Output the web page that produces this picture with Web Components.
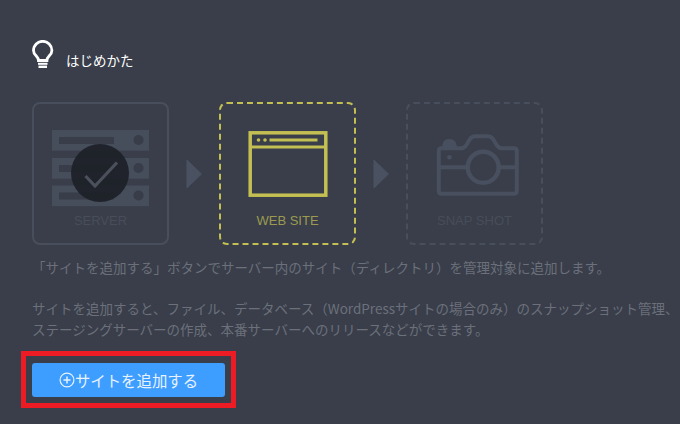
<!DOCTYPE html>
<html lang="ja">
<head>
<meta charset="utf-8">
<title>はじめかた</title>
<style>
    html, body { margin: 0; height: 100%; background: #393e4a; overflow: hidden; }
    body { font-family: "Noto Sans CJK JP", "Noto Sans", sans-serif; }
    svg { display: block; }
</style>
</head>
<body>
<start-guide>
    <guide-step slot="steps" label="SERVER" state="done">
        <svg width="100" height="80" viewBox="0 0 100 80">
            <g fill="#464d5b">
                <rect x="1" y="2" width="97" height="20.7"/>
                <rect x="1" y="30" width="97" height="20.7"/>
                <rect x="1" y="57.5" width="97" height="20.7"/>
            </g>
            <g fill="#383d49">
                <rect x="8" y="9" width="55" height="7"/>
                <rect x="8" y="37" width="55" height="7"/>
                <rect x="8" y="64.5" width="55" height="7"/>
                <circle cx="87.5" cy="12" r="5"/>
                <circle cx="87.5" cy="40" r="5"/>
                <circle cx="87.5" cy="67.5" r="5"/>
            </g>
            <circle cx="49" cy="45" r="29" fill="#1c1f26" fill-opacity=".9"/>
            <path d="M34.5 48 L44 58 L66 34.5" fill="none" stroke="#4b505b" stroke-width="3.2"/>
        </svg>
    </guide-step>
    <step-arrow slot="steps"></step-arrow>
    <guide-step slot="steps" label="WEB SITE" state="active">
        <svg width="100" height="80" viewBox="0 0 100 80" fill="none" stroke="#c4bf52">
            <rect x="12.2" y="4.8" width="75.6" height="62.4" stroke-width="3.5"/>
            <path d="M12 19 H88" stroke-width="2.8"/>
            <circle cx="20.5" cy="12" r="1.8" fill="#c4bf52" stroke="none"/>
            <circle cx="27" cy="12" r="1.8" fill="#c4bf52" stroke="none"/>
            <path d="M31.5 12 H79.5" stroke-width="3"/>
        </svg>
    </guide-step>
    <step-arrow slot="steps"></step-arrow>
    <guide-step slot="steps" label="SNAP SHOT" state="todo">
        <svg width="100" height="80" viewBox="0 0 100 80" fill="none" stroke="#484f5e" stroke-width="4">
            <path d="M16 20.3 H36 Q39 20.3 41 17.5 L45 11 Q47 8.3 50 8.3 H63 Q66 8.3 68 11 L72 17.5 Q74 20.3 77 20.3 H89 Q91.8 20.3 91.8 23 V63 Q91.8 65.7 89 65.7 H16.5 Q13.8 65.7 13.8 63 V23 Q13.8 20.3 16 20.3 Z" stroke-linejoin="round"/>
            <path d="M14 39.3 H43 M73 39.3 H91"/>
            <circle cx="58.2" cy="39.3" r="15.5" stroke-width="4.5"/>
            <path d="M17 20 Q17 11 24 11 Q32 11 32 20 Z" fill="#484f5e" stroke="none"/>
            <circle cx="24.5" cy="29.3" r="2.3" fill="#484f5e" stroke="none"/>
        </svg>
    </guide-step>
    <p slot="text">「サイトを追加する」ボタンでサーバー内のサイト（ディレクトリ）を管理対象に追加します。</p>
    <p slot="text">サイトを追加すると、ファイル、データベース（WordPressサイトの場合のみ）のスナップショット管理、<br>ステージングサーバーの作成、本番サーバーへのリリースなどができます。</p>
    <add-site-button slot="action">サイトを追加する</add-site-button>
</start-guide>

<script>
(function() {
    "use strict";

    var guideTemplate = document.createElement("template");
    guideTemplate.innerHTML = `
        <style>
        :host {
            display: block;
            box-sizing: border-box;
            width: 680px;
            height: 424px;
            padding: 40px 0 0 32px;
            color: #6b707a;
            font-size: 13.5px;
        }
        .title {
            display: flex;
            align-items: flex-end;
            gap: 12px;
            height: 30px;
            margin-bottom: 32px;
            color: #fff;
            font-size: 13.5px;
            line-height: 20px;
        }
        .steps {
            display: flex;
            align-items: center;
        }
        .text {
            margin-top: 12px;
            line-height: 21px;
            white-space: nowrap;
        }
        ::slotted(p) {
            margin: 0 0 20px;
        }
        ::slotted(p:last-of-type) {
            margin-bottom: 0;
        }
        .action {
            width: fit-content;
            margin: 11px 0 0 -11px;
            padding: 7px 6px 6px;
            border: 5px solid #ed1c24;
        }
        svg { display: block; }
        </style>
        <div class="title">
            <svg width="22" height="30" viewBox="0 0 22 30" fill="none" stroke="#fff">
                <path d="M6.5 20.5 C6.5 16 1.5 15.5 1.5 10.5 A9.2 9.2 0 0 1 19.9 10.5 C19.9 15.5 14.9 16 14.9 20.5 Z" stroke-width="2.8"/>
                <path d="M6 23.8 H15.5" stroke-width="2"/>
                <path d="M6.5 26.8 H15" stroke-width="2.4"/>
            </svg>
            <span>はじめかた</span>
        </div>
        <div class="steps"><slot name="steps"></slot></div>
        <div class="text"><slot name="text"></slot></div>
        <div class="action"><slot name="action"></slot></div>
    `;

    class StartGuide extends HTMLElement {
        constructor() {
            super();
            this.attachShadow({ mode: "open" }).appendChild(guideTemplate.content.cloneNode(true));
        }
    }

    var stepTemplate = document.createElement("template");
    stepTemplate.innerHTML = `
        <style>
        :host {
            display: flex;
            flex-direction: column;
            align-items: center;
            box-sizing: border-box;
            width: 137px;
            height: 143px;
            padding-top: 24px;
            border: 2px solid #484e5b;
            border-radius: 8px;
            color: #484d5a;
            font: 13px/18px "Liberation Sans", Arial, sans-serif;
        }
        :host([state="active"]) {
            border: 2px dashed #c4bf52;
            color: #9c9a50;
        }
        :host([state="todo"]) {
            border-style: dashed;
        }
        .label {
            margin-top: 4px;
        }
        </style>
        <slot></slot>
        <div class="label"></div>
    `;

    class GuideStep extends HTMLElement {
        constructor() {
            super();
            this.attachShadow({ mode: "open" }).appendChild(stepTemplate.content.cloneNode(true));
        }

        connectedCallback() {
            this.shadowRoot.querySelector(".label").textContent = this.getAttribute("label");
        }
    }

    class StepArrow extends HTMLElement {
        constructor() {
            super();
            this.attachShadow({ mode: "open" }).innerHTML = `
                <style>
                :host { display: flex; justify-content: center; width: 50px; }
                svg { display: block; }
                </style>
                <svg width="16" height="30" viewBox="0 0 16 30">
                    <path d="M1 1 L15.5 15 L1 29 Z" fill="#4a5262" stroke="#4a5262" stroke-linejoin="round"/>
                </svg>
            `;
        }
    }

    class AddSiteButton extends HTMLElement {
        constructor() {
            super();
            this.attachShadow({ mode: "open" }).innerHTML = `
                <style>
                :host {
                    display: flex;
                    align-items: center;
                    justify-content: center;
                    box-sizing: border-box;
                    width: 193px;
                    height: 34px;
                    border-radius: 3px;
                    background: #3d9eff;
                    color: #e8f2ff;
                    font-size: 15.4px;
                }
                svg { display: block; flex: none; }
                </style>
                <svg width="16" height="16" viewBox="0 0 16 16" fill="none" stroke="#e8f2ff" stroke-width="1.2">
                    <circle cx="8" cy="8" r="6.9"/>
                    <path d="M8 4.5 V11.5 M4.5 8 H11.5" stroke-width="1.5"/>
                </svg>
                <slot></slot>
            `;
        }
    }

    customElements.define("start-guide", StartGuide);
    customElements.define("guide-step", GuideStep);
    customElements.define("step-arrow", StepArrow);
    customElements.define("add-site-button", AddSiteButton);
}) ();
</script>
</body>
</html>
